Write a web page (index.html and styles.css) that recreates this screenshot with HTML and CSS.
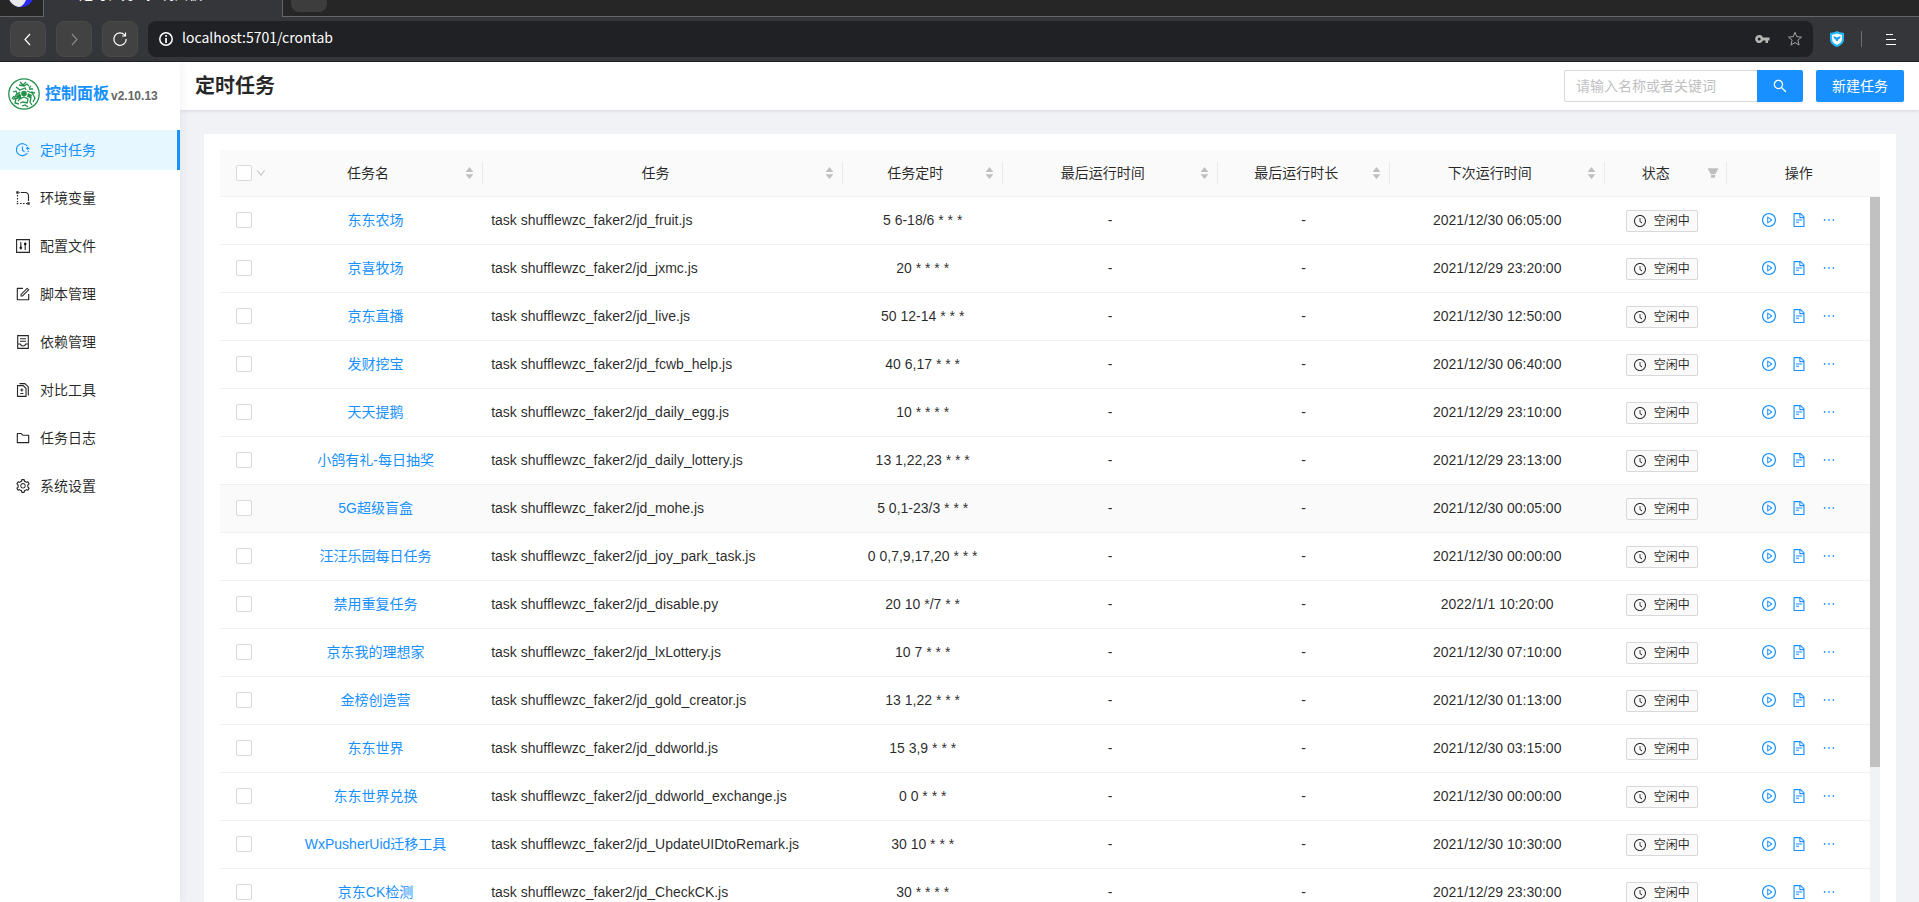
FILE: index.html
```html
<!DOCTYPE html>
<html lang="zh-CN">
<head>
<meta charset="utf-8">
<title>定时任务 - 控制面板</title>
<link rel="stylesheet" href="styles.css">
</head>
<body>
<svg class="sprite" aria-hidden="true">
  <symbol id="clock" viewBox="64 64 896 896"><path d="M512 64C264.6 64 64 264.6 64 512s200.6 448 448 448 448-200.6 448-448S759.4 64 512 64zm0 820c-205.4 0-372-166.6-372-372s166.6-372 372-372 372 166.6 372 372-166.6 372-372 372z"/><path d="M686.7 638.6L544.1 535.5V288c0-4.4-3.6-8-8-8H488c-4.4 0-8 3.6-8 8v275.4c0 2.6 1.2 5 3.3 6.5l165.4 120.6c3.6 2.6 8.6 1.8 11.2-1.7l28.6-39c2.6-3.7 1.8-8.7-1.8-11.2z"/></symbol>
  <symbol id="play" viewBox="64 64 896 896"><path d="M512 64C264.6 64 64 264.6 64 512s200.6 448 448 448 448-200.6 448-448S759.4 64 512 64zm0 820c-205.4 0-372-166.6-372-372s166.6-372 372-372 372 166.6 372 372-166.6 372-372 372z"/><path d="M719.4 499.1l-296.1-215A15.9 15.9 0 00398 297v430c0 13.1 14.8 20.5 25.3 12.9l296.1-215a15.9 15.9 0 000-25.8zm-257.6 134V390.9L628.5 512 461.8 633.1z"/></symbol>
  <symbol id="file" viewBox="64 64 896 896"><path d="M854.6 288.6L639.4 73.4c-6-6-14.1-9.4-22.6-9.4H192c-17.7 0-32 14.3-32 32v832c0 17.7 14.3 32 32 32h640c17.7 0 32-14.3 32-32V311.3c0-8.5-3.4-16.7-9.4-22.7zM790.2 326H602V137.8L790.2 326zm1.8 562H232V136h302v216a42 42 0 0042 42h216v494zM504 618H320c-4.4 0-8 3.6-8 8v48c0 4.4 3.6 8 8 8h184c4.4 0 8-3.6 8-8v-48c0-4.4-3.6-8-8-8zM312 490v48c0 4.4 3.6 8 8 8h384c4.4 0 8-3.6 8-8v-48c0-4.4-3.6-8-8-8H320c-4.4 0-8 3.6-8 8z"/></symbol>
  <symbol id="more" viewBox="64 64 896 896"><path d="M176 511a56 56 0 10112 0 56 56 0 10-112 0zm280 0a56 56 0 10112 0 56 56 0 10-112 0zm280 0a56 56 0 10112 0 56 56 0 10-112 0z"/></symbol>
  <symbol id="search" viewBox="64 64 896 896"><path d="M909.6 854.5L649.9 594.8C690.2 542.7 712 479 712 412c0-80.2-31.3-155.4-87.9-212.1-56.6-56.7-132-87.9-212.1-87.9s-155.5 31.3-212.1 87.9C143.2 256.5 112 331.8 112 412c0 80.1 31.3 155.5 87.9 212.1C256.5 680.8 331.8 712 412 712c67 0 130.6-21.8 182.7-62l259.7 259.6a8.2 8.2 0 0011.6 0l43.6-43.5a8.2 8.2 0 000-11.6zM570.4 570.4C528 612.7 471.8 636 412 636s-116-23.3-158.4-65.6C211.3 528 188 471.8 188 412s23.3-116.1 65.6-158.4C296 211.3 352.2 188 412 188s116.1 23.2 158.4 65.6S636 352.2 636 412s-23.3 116.1-65.6 158.4z"/></symbol>
  <symbol id="sort" viewBox="0 0 11 14"><path d="M1.600 5.900L5.500 1.100l3.900 4.800zM1.600 8.300L5.500 13l3.900-4.700z"/></symbol>
  <symbol id="filter" viewBox="64 64 896 896"><path d="M349 838c0 17.700 14.200 32 31.800 32h262.400c17.600 0 31.800-14.300 31.800-32V642H349v196zm531.100-684H143.900c-24.500 0-39.800 26.700-27.500 48l221.300 376h348.800l221.300-376c12.100-21.300-3.200-48-27.700-48z"/></symbol>
  <symbol id="down" viewBox="64 64 896 896"><path d="M884 256h-75c-5.100 0-9.900 2.500-12.900 6.600L512 654.200 227.900 262.600c-3-4.100-7.800-6.600-12.900-6.600h-75c-6.500 0-10.300 7.400-6.500 12.700l352.600 486.100c12.800 17.600 39 17.600 51.700 0l352.600-486.100c3.900-5.300.1-12.700-6.400-12.700z"/></symbol>
  <symbol id="folder" viewBox="64 64 896 896"><path d="M880 298.400H521L403.700 186.200a8.150 8.150 0 00-5.500-2.200H144c-17.700 0-32 14.300-32 32v592c0 17.700 14.300 32 32 32h736c17.700 0 32-14.300 32-32V330.400c0-17.700-14.300-32-32-32zM840 768H184V256h188.500l119.600 114.400H840V768z"/></symbol>
  <symbol id="edit" viewBox="64 64 896 896"><path d="M904 512h-56c-4.400 0-8 3.600-8 8v320H184V184h320c4.400 0 8-3.600 8-8v-56c0-4.400-3.600-8-8-8H144c-17.700 0-32 14.300-32 32v736c0 17.700 14.300 32 32 32h736c17.700 0 32-14.300 32-32V520c0-4.400-3.600-8-8-8z"/><path d="M355.900 534.900L354 653.800c-.1 8.900 7.100 16.200 16 16.200h.4l118-2.900c2-.1 4-.9 5.400-2.300l415.900-415c3.100-3.100 3.100-8.200 0-11.300L785.400 114.300c-1.600-1.600-3.600-2.300-5.700-2.300s-4.100.8-5.700 2.300l-415.800 415a8.300 8.300 0 00-2.300 5.600zm63.500 23.600L779.700 199l45.200 45.100-360.500 359.700-45.700 1.100.7-46.400z"/></symbol>
  <symbol id="gear" viewBox="64 64 896 896"><path d="M924.8 625.7l-65.5-56c3.1-19 4.7-38.4 4.7-57.8s-1.6-38.8-4.7-57.8l65.500-56a32.030 32.030 0 009.300-35.200l-.9-2.600a443.740 443.740 0 00-79.700-137.900l-1.800-2.100a32.120 32.120 0 00-35.100-9.500l-81.300 28.900c-30-24.600-63.500-44-99.700-57.600l-15.700-85a32.050 32.050 0 00-25.800-25.700l-2.700-.5c-52.100-9.400-106.900-9.400-159 0l-2.700.5a32.050 32.050 0 00-25.800 25.700l-15.800 85.400a351.860 351.860 0 00-99 57.400l-81.900-29.100a32 32 0 00-35.100 9.500l-1.800 2.100a446.020 446.020 0 00-79.700 137.900l-.9 2.600c-4.500 12.500-.8 26.500 9.300 35.200l66.300 56.600c-3.100 18.800-4.600 38-4.600 57.100 0 19.200 1.500 38.400 4.600 57.100L99 625.500a32.030 32.030 0 00-9.300 35.200l.9 2.600c18.100 50.400 44.900 96.900 79.700 137.900l1.800 2.100a32.120 32.120 0 0035.100 9.500l81.900-29.100c29.800 24.500 63.100 43.900 99 57.400l15.800 85.400a32.050 32.050 0 0025.800 25.700l2.700.5a449.400 449.400 0 00159 0l2.700-.5a32.050 32.050 0 0025.800-25.700l15.700-85a350 350 0 0099.700-57.600l81.300 28.900a32 32 0 0035.100-9.500l1.800-2.100c34.800-41.100 61.600-87.500 79.700-137.900l.9-2.600c4.500-12.300.8-26.300-9.300-35zM788.300 465.900c2.500 15.100 3.800 30.600 3.800 46.100s-1.300 31-3.800 46.100l-6.600 40.100 74.700 63.900a370.030 370.030 0 01-42.600 73.600L721 702.800l-31.400 25.800c-23.900 19.600-50.500 35-79.300 45.800l-38.100 14.300-17.900 97a377.500 377.500 0 01-85 0l-17.900-97.200-37.800-14.500c-28.500-10.800-55-26.200-78.700-45.700l-31.400-25.900-93.400 33.200c-17-22.900-31.200-47.600-42.600-73.600l75.500-64.500-6.500-40c-2.400-14.900-3.700-30.300-3.700-45.500 0-15.300 1.200-30.600 3.700-45.500l6.500-40-75.500-64.500c11.300-26.100 25.600-50.700 42.600-73.600l93.400 33.200 31.400-25.900c23.700-19.500 50.200-34.900 78.700-45.700l37.900-14.300 17.900-97.200c28.100-3.200 56.800-3.200 85 0l17.900 97 38.100 14.300c28.700 10.800 55.400 26.200 79.300 45.800l31.400 25.800 92.800-32.900c17 22.900 31.200 47.600 42.600 73.600L781.800 426l6.500 39.900zM512 326c-97.200 0-176 78.800-176 176s78.800 176 176 176 176-78.800 176-176-78.800-176-176-176zm79.200 255.200A111.600 111.600 0 01512 614c-29.900 0-58-11.700-79.200-32.800A111.600 111.600 0 01400 502c0-29.900 11.700-58 32.800-79.200C454 401.600 482.100 390 512 390c29.900 0 58 11.600 79.200 32.800A111.600 111.600 0 01624 502c0 29.900-11.700 58-32.800 79.200z"/></symbol>
  <symbol id="timer" viewBox="0 0 14 14"><path fill="none" stroke="currentColor" stroke-width="1.100" d="M11.400 3.300A6 6 0 1 0 11.400 10M6.500 3.500v3.800l2 1.500M10.200 5.400h3.300M11.500 4v2.800M11.500 8.300h1.500"/></symbol>
  <symbol id="group" viewBox="0 0 14 14"><path fill="none" stroke="currentColor" stroke-width="1.100" d="M5 1.500h4.500a3 3 0 0 1 3 3V10"/><path fill="none" stroke="currentColor" stroke-width="1.100" stroke-dasharray="1.600 1.400" d="M1.500 4v7M4 12.500h7"/><path d="M.3.300h2.400v2.400H.3zM11.300 11.300h2.400v2.400h-2.400zM.8 11.800h1.400v1.400H.8zM3.300 1h1v1h-1z"/></symbol>
  <symbol id="control" viewBox="0 0 14 14"><path fill="none" stroke="currentColor" stroke-width="1.100" d="M.6.600h12.800v12.800H.6zM4.800 3v7.500M9.200 3.500V11"/><circle cx="4.800" cy="8.800" r="1.300"/><circle cx="9.200" cy="5" r="1.300"/></symbol>
  <symbol id="container" viewBox="0 0 14 14"><path fill="none" stroke="currentColor" stroke-width="1.100" d="M1.700.6h10.600v12.800H1.700zM4 3.700h6M4 6.300h6M1.700 9h2.600c.4 1.300 1.400 2 2.700 2s2.300-.7 2.700-2h2.600"/></symbol>
  <symbol id="diff" viewBox="0 0 14 14"><path fill="none" stroke="currentColor" stroke-width="1.100" d="M1.500 2.600h5.700l2.800 2.700v8.100H1.500zM3.500.6h5.400l3.400 3.300v8.600M5.800 5.500v3M4.300 7h3M4.300 10.500h3"/></symbol>
</svg>

<header class="browser">
  <div class="tabs">
    <div class="pinned"><svg width="28" height="28" viewBox="0 0 28 28"><circle cx="14" cy="14" r="13" fill="#2a2af5"/><path d="M1 14a13 13 0 0 0 11 13c5-1 8-7 8-13z" fill="#e9e9ec"/></svg></div>
    <div class="tab">定时任务 - 控制面板</div>
    <div class="strip"><button class="newtab" aria-label="新标签页"></button></div>
  </div>
  <div class="toolbar">
    <button class="nav" aria-label="后退"><svg width="16" height="16" viewBox="0 0 16 16"><path d="M10 3L5 8.500l5 5.500"/></svg></button>
    <button class="nav dim" aria-label="前进"><svg width="16" height="16" viewBox="0 0 16 16"><path d="M6 3l5 5.500L6 14"/></svg></button>
    <button class="nav" aria-label="刷新"><svg width="16" height="16" viewBox="0 0 16 16"><path d="M13 4.500A6.200 6.200 0 1 0 14.200 8M13.500 1.500v3.500H10"/></svg></button>
    <div class="address">
      <svg width="14" height="14" viewBox="0 0 14 14"><circle cx="7" cy="7" r="6.200" fill="none" stroke="#fff" stroke-width="1.500"/><path fill="#fff" d="M6.200 3h1.700v1.700H6.200zM6.200 6h1.700v5H6.200z"/></svg>
      <input class="url" aria-label="地址" value="localhost:5701/crontab">
      <svg width="15" height="14" viewBox="0 0 15 14"><path fill="#b5b5b5" fill-rule="evenodd" d="M8 5.400A4.100 4.100 0 1 0 8 8.600h2.500V11h2.500V8.600h1.500V5.400zM4.200 5.500a1.500 1.500 0 1 1 0 3 1.500 1.500 0 0 1 0-3z"/></svg>
      <svg class="star" width="16" height="16" viewBox="0 0 16 16"><path fill="none" stroke="#a5a5a5" d="M8 1.300l1.800 4.400 4.700.4-3.600 3.100 1.200 4.900L8 11.500l-4.100 2.600 1.200-4.900-3.600-3.100 4.700-.4z"/></svg>
    </div>
    <svg class="shield" width="14" height="16" viewBox="0 0 14 16"><path fill="#22b8fa" d="M7 0l2 1 5 1v6c0 4-3 6.500-7 8-4-1.500-7-4-7-8V2l5-1z"/><path fill="#fff" d="M2 4l5-1.500L12 4v4c0 2.700-2 4.500-5 5.800C4 12.500 2 10.700 2 8z"/><path fill="#1da0f0" d="M3.500 5l3.500 1.600L10.500 5c0 2-1 3.500-2.500 3.800V10H6V8.800C4.500 8.500 3.500 7 3.500 5z"/></svg>
    <span class="divider"></span>
    <button class="menu" aria-label="菜单"><svg width="10" height="12" viewBox="0 0 10 12"><path stroke="#fff" d="M0 .5h7M0 5.500h10M0 10.500h10"/></svg></button>
  </div>
</header>

<div class="app">
  <aside class="side">
    <div class="brand">
      <svg width="32" height="32" viewBox="0 0 32 32"><g fill="none" stroke="#219149"><circle cx="16" cy="16" r="15.200" stroke-width="1.300"/><path stroke-width="1.300" d="M12 4l3 3 3-3M11 7l5 1 3-2 2 2M8 9l4 3 5-2 1 2M25 11l-4 0M23 14l4 1M5 14l3-1 1 3M19 13l5 2 3 5-2 4M20 17l3 3-1 4 2 3M12 14l-4 3-2 4 4-1 3-3M6 18l-2 3M8 21l-1 4 4 1M12 21l4-2 4 2-1 4-4-1-3 1M14 28l3-1 3 2M13 19l-3 4M21 10l2-2"/></g><path fill="#219149" d="M8 18l4-3 1 4-4 2zM20 15l4 2-1 3-4-1z"/><circle cx="16" cy="15.500" r="2.800" fill="#219149"/></svg>
      <h1 class="product">控制面板</h1><span class="version">v2.10.13</span>
    </div>
    <nav class="links">
      <a class="link active" href="#"><svg><use href="#timer"/></svg>定时任务</a>
      <a class="link" href="#"><svg><use href="#group"/></svg>环境变量</a>
      <a class="link" href="#"><svg><use href="#control"/></svg>配置文件</a>
      <a class="link" href="#"><svg><use href="#edit"/></svg>脚本管理</a>
      <a class="link" href="#"><svg><use href="#container"/></svg>依赖管理</a>
      <a class="link" href="#"><svg><use href="#diff"/></svg>对比工具</a>
      <a class="link" href="#"><svg><use href="#folder"/></svg>任务日志</a>
      <a class="link" href="#"><svg><use href="#gear"/></svg>系统设置</a>
    </nav>
  </aside>
  <main class="main">
    <div class="head">
      <h2 class="title">定时任务</h2>
      <form class="search">
        <input class="query" type="text" aria-label="搜索" placeholder="请输入名称或者关键词">
        <button class="primary find" type="button" aria-label="搜索"><svg><use href="#search"/></svg></button>
      </form>
      <button class="primary create">新建任务</button>
    </div>
    <div class="card">
      <table class="jobs">
        <colgroup><col class="c-sel"><col class="c-name"><col class="c-task"><col class="c-cron"><col class="c-date"><col class="c-len"><col class="c-date"><col class="c-state"><col></colgroup>
        <thead>
          <tr>
            <th class="sel"><span class="pick"><input type="checkbox" aria-label="全选"><svg class="tiny"><use href="#down"/></svg></span></th>
            <th><span class="cap"><span class="label">任务名</span><svg class="sort"><use href="#sort"/></svg></span></th>
            <th><span class="cap"><span class="label">任务</span><svg class="sort"><use href="#sort"/></svg></span></th>
            <th><span class="cap"><span class="label">任务定时</span><svg class="sort"><use href="#sort"/></svg></span></th>
            <th><span class="cap"><span class="label">最后运行时间</span><svg class="sort"><use href="#sort"/></svg></span></th>
            <th><span class="cap"><span class="label">最后运行时长</span><svg class="sort"><use href="#sort"/></svg></span></th>
            <th><span class="cap"><span class="label">下次运行时间</span><svg class="sort"><use href="#sort"/></svg></span></th>
            <th><span class="cap"><span class="label">状态</span><svg class="funnel"><use href="#filter"/></svg></span></th>
            <th><span class="cap"><span class="label">操作</span></span></th>
          </tr>
        </thead>
        <tbody id="rows"></tbody>
      </table>
      <div class="rail"><div class="rail-head"></div><div class="track"><div class="thumb"></div></div></div>
    </div>
  </main>
</div>
<script src="app.js"></script>
</body>
</html>
```

FILE: app.js
```js
const jobs = [
  ["东东农场", "jd_fruit.js", "5 6-18/6 * * *", "2021/12/30 06:05:00"],
  ["京喜牧场", "jd_jxmc.js", "20 * * * *", "2021/12/29 23:20:00"],
  ["京东直播", "jd_live.js", "50 12-14 * * *", "2021/12/30 12:50:00"],
  ["发财挖宝", "jd_fcwb_help.js", "40 6,17 * * *", "2021/12/30 06:40:00"],
  ["天天提鹅", "jd_daily_egg.js", "10 * * * *", "2021/12/29 23:10:00"],
  ["小鸽有礼-每日抽奖", "jd_daily_lottery.js", "13 1,22,23 * * *", "2021/12/29 23:13:00"],
  ["5G超级盲盒", "jd_mohe.js", "5 0,1-23/3 * * *", "2021/12/30 00:05:00"],
  ["汪汪乐园每日任务", "jd_joy_park_task.js", "0 0,7,9,17,20 * * *", "2021/12/30 00:00:00"],
  ["禁用重复任务", "jd_disable.py", "20 10 */7 * *", "2022/1/1 10:20:00"],
  ["京东我的理想家", "jd_lxLottery.js", "10 7 * * *", "2021/12/30 07:10:00"],
  ["金榜创造营", "jd_gold_creator.js", "13 1,22 * * *", "2021/12/30 01:13:00"],
  ["东东世界", "jd_ddworld.js", "15 3,9 * * *", "2021/12/30 03:15:00"],
  ["东东世界兑换", "jd_ddworld_exchange.js", "0 0 * * *", "2021/12/30 00:00:00"],
  ["WxPusherUid迁移工具", "jd_UpdateUIDtoRemark.js", "30 10 * * *", "2021/12/30 10:30:00"],
  ["京东CK检测", "jd_CheckCK.js", "30 * * * *", "2021/12/29 23:30:00"]
];
const highlighted = 6;

document.getElementById("rows").innerHTML = jobs.map(([name, file, cron, next], i) => `
  <tr class="${i === highlighted ? "hover" : ""}">
    <td class="sel"><span class="pick"><input type="checkbox" aria-label="选择 ${name}"></span></td>
    <td><a class="job" href="#">${name}</a></td>
    <td class="task">task shufflewzc_faker2/${file}</td>
    <td>${cron}</td>
    <td>-</td>
    <td>-</td>
    <td>${next}</td>
    <td class="state"><span class="tag"><svg><use href="#clock"/></svg>空闲中</span></td>
    <td><span class="actions">
      <button class="act" aria-label="运行"><svg><use href="#play"/></svg></button>
      <button class="act" aria-label="日志"><svg><use href="#file"/></svg></button>
      <button class="act" aria-label="更多"><svg><use href="#more"/></svg></button>
    </span></td>
  </tr>`).join("");
```

FILE: styles.css
```css
* { box-sizing: border-box; }
html, body { height: 100%; }
body {
  margin: 0;
  display: flex;
  flex-direction: column;
  overflow: hidden;
  background: #f0f2f5;
  color: rgba(0, 0, 0, 0.85);
  font: 14px/22px "Liberation Sans", "Noto Sans CJK SC", sans-serif;
}
button, input { font: inherit; color: inherit; margin: 0; padding: 0; border: 0; background: none; }
svg { display: block; flex: none; fill: currentColor; }
a { color: inherit; text-decoration: none; }
.sprite { position: absolute; width: 0; height: 0; }

.browser { flex: none; background: #35363a; border-bottom: 1px solid #231f28; }
.tabs { display: flex; height: 17px; overflow: hidden; background: #262626; }
.pinned { width: 44px; padding: 0 0 8px 7px; border-right: 1px solid #666; border-bottom: 1px solid #666; display: flex; align-items: flex-end; }
.tab { width: 238px; background: #35363a; padding: 0 0 13px 35px; color: #fff; font: 14px/22px "Noto Sans CJK SC", sans-serif; display: flex; align-items: flex-end; }
.strip { flex: 1; padding-left: 8px; border-left: 1px solid #666; border-bottom: 1px solid #666; }
.newtab { display: block; width: 36px; height: 12px; border-radius: 0 0 8px 8px; background: #3d3d3d; }
.toolbar { display: flex; align-items: center; gap: 10px; height: 44px; padding: 0 20px 0 10px; }
.nav { width: 36px; height: 36px; border-radius: 8px; background: #424242; border: 1px solid #4a4a4a; display: flex; align-items: center; justify-content: center; }
.nav svg { fill: none; stroke: #fff; stroke-width: 1.2; }
.nav.dim svg { stroke: #8a8a8a; }
.address { flex: 1; height: 36px; border-radius: 8px; background: #202124; display: flex; align-items: center; padding: 0 10px 0 11px; }
.url { flex: 1; padding: 0 9px 4px; height: 24px; color: #fff; font: 14px/20px "Noto Sans CJK SC", sans-serif; }
.star { margin-left: 17px; }
.shield { margin-left: 7px; }
.divider { width: 1px; height: 16px; margin-left: 7px; background: #6c6d70; }
.menu { margin: 2px 3px 0 14px; }

.app { flex: 1; min-height: 0; display: flex; }
.side { width: 180px; flex: none; background: #fff; box-shadow: 2px 0 8px rgba(29, 35, 41, 0.05); z-index: 1; }
.brand { display: flex; align-items: center; height: 68px; padding: 0 8px 4px; }
.product { margin: 0 0 0 5px; font-size: 16px; line-height: 32px; color: #1890ff; }
.version { font-size: 12px; font-weight: 700; color: #666; margin-left: 2px; padding-top: 4px; }
.links { display: flex; flex-direction: column; gap: 8px; }
.link { display: flex; align-items: center; gap: 10px; height: 40px; padding-left: 16px; border-right: 3px solid transparent; }
.link svg { width: 14px; height: 14px; }
.link.active { background: #e6f7ff; color: #1890ff; border-color: #1890ff; }

.main { flex: 1; min-width: 0; display: flex; flex-direction: column; }
.head { display: flex; align-items: center; flex: none; height: 48px; padding: 0 15px; background: #fff; box-shadow: 0 1px 4px rgba(0, 21, 41, 0.12); }
.title { flex: 1; margin: 0; font-size: 20px; line-height: 32px; }
.search { display: flex; margin-right: 13px; }
.query { width: 193px; height: 32px; padding: 0 11px; border: 1px solid #d9d9d9; border-right: 0; border-radius: 2px 0 0 2px; background: #fff; }
.query::placeholder { color: #bfbfbf; opacity: 1; }
.primary { height: 32px; background: #1890ff; color: #fff; border-radius: 2px; box-shadow: 0 2px 0 rgba(0, 0, 0, 0.04); }
.find { width: 46px; display: flex; align-items: center; justify-content: center; border-radius: 0 2px 2px 0; }
.find svg { width: 14px; height: 14px; }
.create { width: 88px; }

.card { flex: 1; min-height: 0; overflow: hidden; display: flex; margin: 24px 23px 0 24px; padding: 16px 16px 0; background: #fff; align-items: flex-start; }
.jobs { flex: 1; min-width: 0; width: 100%; table-layout: fixed; border-collapse: separate; border-spacing: 0; text-align: center; }
.c-sel { width: 48px; }
.c-name, .c-date { width: 13.04%; }
.c-task { width: 21.8%; }
.c-cron { width: 9.68%; }
.c-len { width: 10.42%; }
.c-state { width: 7.38%; }
th { height: 47px; padding: 0; background: #fafafa; border-bottom: 1px solid #f0f0f0; font-weight: 400; }
td { height: 48px; padding: 0 8px 2px; border-bottom: 1px solid #f0f0f0; white-space: nowrap; }
.hover td { background: #fafafa; }
.cap { display: flex; align-items: center; height: 22px; padding: 0 7px 0 8px; border-right: 1px solid #ebebeb; }
th:last-child .cap { border-right: 0; }
.label { flex: 1; }
.sort { width: 11px; height: 14px; margin-left: 4px; color: #bfbfbf; }
.funnel { width: 12px; height: 12px; margin-left: 8px; color: #bfbfbf; }
th.sel { padding: 0 0 0 16px; }
td.sel { padding: 0 0 2px 16px; }
.pick { display: flex; align-items: center; gap: 4px; }
.pick input { appearance: none; width: 16px; height: 16px; border: 1px solid #d9d9d9; border-radius: 2px; background: #fff; }
.tiny { width: 10px; height: 10px; color: #bfbfbf; }
.job { color: #1890ff; }
.task { text-align: left; }
td.state { padding-bottom: 0; }
.tag { display: inline-flex; align-items: center; gap: 8px; height: 22px; padding: 0 7px; margin-right: 8px; border: 1px solid #d9d9d9; border-radius: 2px; background: #fafafa; font-size: 12px; line-height: 20px; vertical-align: middle; }
.tag svg { width: 12px; height: 12px; }
.actions { display: flex; justify-content: center; gap: 16px; padding-left: 2px; color: #1890ff; }
.act svg { width: 14px; height: 14px; }
.rail { flex: none; width: 10px; align-self: stretch; display: flex; flex-direction: column; }
.rail-head { height: 47px; background: #fafafa; border-bottom: 1px solid #f0f0f0; }
.track { flex: 1; background: #f1f2f3; }
.thumb { height: 570px; background: #c1c1c1; }
```
